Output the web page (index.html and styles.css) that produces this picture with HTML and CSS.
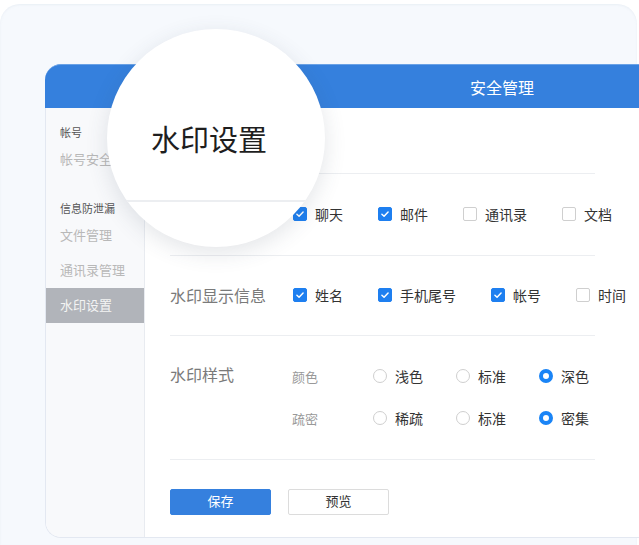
FILE: index.html
```html
<!DOCTYPE html>
<html lang="zh-CN">
<head>
<meta charset="utf-8">
<title>安全管理</title>
<link rel="stylesheet" href="styles.css">
</head>
<body>
<div class="stage">
  <div class="window">
    <div class="header"><span class="title">安全管理</span></div>
    <div class="body">
      <aside class="sidebar">
        <div class="group">帐号</div>
        <div class="item">帐号安全</div>
        <div class="group g2">信息防泄漏</div>
        <div class="item">文件管理</div>
        <div class="item">通讯录管理</div>
        <div class="item active">水印设置</div>
      </aside>
      <main class="main">
        <div class="content">
          <div class="row title-row"></div>
          <div class="row r1">
            <div class="label">水印应用范围</div>
            <div class="opts">
              <label class="cb"><span class="box on"><svg viewBox="0 0 14 14"><path d="M3.4 7.2 L5.9 9.6 L10.6 4.6"/></svg></span>聊天</label>
              <label class="cb"><span class="box on"><svg viewBox="0 0 14 14"><path d="M3.4 7.2 L5.9 9.6 L10.6 4.6"/></svg></span>邮件</label>
              <label class="cb"><span class="box"></span>通讯录</label>
              <label class="cb"><span class="box"></span>文档</label>
            </div>
          </div>
          <div class="row r2">
            <div class="label">水印显示信息</div>
            <div class="opts">
              <label class="cb"><span class="box on"><svg viewBox="0 0 14 14"><path d="M3.4 7.2 L5.9 9.6 L10.6 4.6"/></svg></span>姓名</label>
              <label class="cb"><span class="box on"><svg viewBox="0 0 14 14"><path d="M3.4 7.2 L5.9 9.6 L10.6 4.6"/></svg></span>手机尾号</label>
              <label class="cb"><span class="box on"><svg viewBox="0 0 14 14"><path d="M3.4 7.2 L5.9 9.6 L10.6 4.6"/></svg></span>帐号</label>
              <label class="cb"><span class="box"></span>时间</label>
            </div>
          </div>
          <div class="row r3">
            <div class="label">水印样式</div>
            <div class="subs">
              <div class="sub">
                <span class="sublabel">颜色</span>
                <label class="rd"><span class="dot"></span>浅色</label>
                <label class="rd"><span class="dot"></span>标准</label>
                <label class="rd"><span class="dot on"></span>深色</label>
              </div>
              <div class="sub">
                <span class="sublabel">疏密</span>
                <label class="rd"><span class="dot"></span>稀疏</label>
                <label class="rd"><span class="dot"></span>标准</label>
                <label class="rd"><span class="dot on"></span>密集</label>
              </div>
            </div>
          </div>
          <div class="actions">
            <button class="btn primary">保存</button>
            <button class="btn">预览</button>
          </div>
        </div>
      </main>
    </div>
  </div>
  <div class="magnifier">
    <div class="mag-title">水印设置</div>
    <div class="mag-line"></div>
  </div>
</div>
</body>
</html>
```

FILE: styles.css
```css
* { box-sizing: border-box; }
html, body { margin: 0; padding: 0; }
body {
  width: 639px;
  height: 545px;
  overflow: hidden;
  background: #ffffff;
  font-family: "Noto Sans CJK SC", "Noto Sans", sans-serif;
  color: #333;
}
.stage {
  position: relative;
  margin-top: 4px;
  width: 637px;
  height: 541px;
  border-radius: 20px 20px 0 0;
  background: #f6f9fd;
  padding: 60px 0 0 45px;
  box-shadow: inset 0 1px 2px rgba(200, 210, 225, 0.25);
}
.window {
  width: 914px;
}
.header {
  height: 44px;
  background: #3580dd;
  border-top-left-radius: 16px;
  border-top: 1px solid #6aa2e6;
  text-align: center;
  padding-top: 2px;
}
.title {
  color: #fff;
  font-size: 16px;
  line-height: 40px;
}
.body {
  display: flex;
  height: 430px;
  background: #fff;
  border-left: 1px solid #e3e8f1;
  border-bottom: 1px solid #e3e8f1;
  border-bottom-left-radius: 16px;
  overflow: hidden;
}
.sidebar {
  width: 99px;
  flex: none;
  background: #f8f9fb;
  border-right: 1px solid #e8ebf0;
  padding-top: 15px;
}
.group {
  height: 19px;
  line-height: 19px;
  font-size: 11px;
  color: #555;
  padding-left: 14px;
}
.group.g2 { margin-top: 22px; }
.item {
  height: 35px;
  line-height: 33px;
  padding-bottom: 2px;
  font-size: 13px;
  color: #b8b8b8;
  padding-left: 14px;
}
.item.active {
  background: #b1b4ba;
  color: #f4f4f4;
}
.main {
  flex: 1;
  padding-left: 25px;
}
.content { width: 425px; }
.row {
  display: flex;
  align-items: center;
  border-bottom: 1px solid #eceef1;
}
.title-row { height: 66px; }
.r1 { height: 82px; padding-bottom: 2px; }
.r2 { height: 80px; padding-bottom: 2px; }
.label {
  width: 123px;
  flex: none;
  font-size: 16px;
  color: #7a7a7a;
}
.opts {
  display: flex;
  gap: 35px;
  white-space: nowrap;
}
.cb {
  display: flex;
  align-items: center;
  font-size: 14px;
  color: #333;
  line-height: 20px;
}
.box {
  width: 14px;
  height: 14px;
  border: 1px solid #cfcfcf;
  border-radius: 2px;
  background: #fff;
  margin-right: 8px;
  display: flex;
}
.box.on {
  background: #1e7ff0;
  border-color: #1e7ff0;
}
.box svg {
  width: 12px;
  height: 12px;
  fill: none;
  stroke: #fff;
  stroke-width: 1.7;
  stroke-linecap: round;
  stroke-linejoin: round;
}
.r3 {
  height: 124px;
  align-items: flex-start;
  padding-top: 26px;
}
.r3 .label {
  width: 122px;
  line-height: 24px;
}
.subs {
  display: flex;
  flex-direction: column;
  gap: 14px;
  white-space: nowrap;
}
.sub {
  display: flex;
  align-items: center;
  height: 28px;
}
.sublabel {
  width: 81px;
  font-size: 13px;
  color: #999;
}
.rd {
  width: 83px;
  display: flex;
  align-items: center;
  font-size: 14px;
  color: #333;
}
.dot {
  width: 14px;
  height: 14px;
  border-radius: 50%;
  border: 1px solid #cfcfcf;
  background: #fff;
  margin-right: 8px;
}
.dot.on {
  border: 4px solid #1a84f6;
}
.actions {
  display: flex;
  gap: 17px;
  margin-top: 29px;
}
.btn {
  width: 101px;
  height: 26px;
  border: 1px solid #dcdcdc;
  border-radius: 2px;
  background: #fff;
  font-family: inherit;
  font-size: 13px;
  line-height: 22px;
  padding: 0 0 2px;
  color: #333;
}
.btn.primary {
  background: #3580de;
  border-color: #3580de;
  color: #fff;
}
.magnifier {
  position: absolute;
  left: 107px;
  top: 25px;
  width: 218px;
  height: 218px;
  border-radius: 50%;
  background: #fff;
  overflow: hidden;
  box-shadow: 0 6px 22px rgba(60, 70, 90, 0.14);
  padding-top: 91px;
}
.mag-title {
  padding-left: 44px;
  font-size: 29px;
  line-height: 36px;
  color: #1e1e1e;
  white-space: nowrap;
}
.mag-line {
  margin-top: 44px;
  height: 2px;
  background: #eceef1;
}
```
